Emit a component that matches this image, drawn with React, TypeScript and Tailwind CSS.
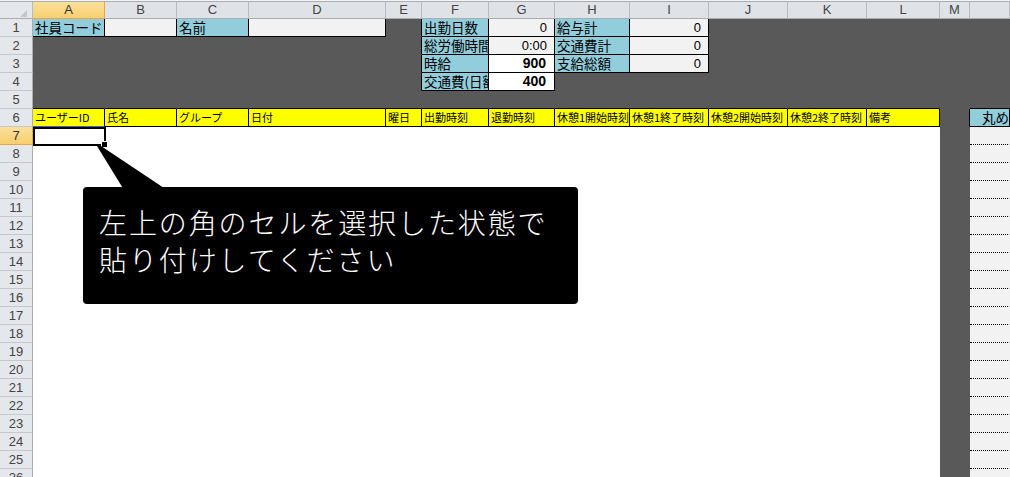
import React from 'react';

const GRID =
  'grid grid-cols-[33px_72px_72px_72px_137px_36px_67px_66px_75px_79px_79px_79px_73px_30px_1fr]';

const LETTERS = ['A', 'B', 'C', 'D', 'E', 'F', 'G', 'H', 'I', 'J', 'K', 'L', 'M', ''];

const S = {
  dark: 'bg-[#595959] border-r-[#595959] border-b-[#595959]',
  darkR: 'bg-[#595959] border-r-black border-b-[#595959]',
  darkB: 'bg-[#595959] border-r-[#595959] border-b-black',
  blue: 'bg-[#92cddc] border-r-black border-b-black',
  gray: 'bg-[#f2f2f2] border-r-black border-b-black',
  white: 'bg-white border-r-black border-b-black',
  yellow: 'bg-[#ffff00] border-r-black border-b-black',
  yellowSel: 'bg-[#ffff00] border-r-black border-b-[#3a62c8]',
  blank: 'bg-white border-r-white border-b-white',
  dots: 'bg-[#f2f2f2] border-r-[#f2f2f2] border-b-black border-dotted',
};

type Cell = {
  s: keyof typeof S;
  t?: string;
  num?: boolean;
  bold?: boolean;
  small?: boolean;
  pad?: boolean;
  clip?: boolean;
};

const d = (n: number, s: keyof typeof S = 'dark'): Cell[] => Array.from({length: n}, () => ({s}));

const headers = [
  'ユーザーID',
  '氏名',
  'グループ',
  '日付',
  '曜日',
  '出勤時刻',
  '退勤時刻',
  '休憩1開始時刻',
  '休憩1終了時刻',
  '休憩2開始時刻',
  '休憩2終了時刻',
  '備考',
];

const rows: Cell[][] = [
  [
    {s: 'blue', t: '社員コード'},
    {s: 'gray'},
    {s: 'blue', t: '名前'},
    {s: 'gray'},
    {s: 'darkR'},
    {s: 'blue', t: '出勤日数'},
    {s: 'gray', t: '0', num: true},
    {s: 'blue', t: '給与計'},
    {s: 'gray', t: '0', num: true},
    ...d(5),
  ],
  [
    ...d(4),
    {s: 'darkR'},
    {s: 'blue', t: '総労働時間', clip: true},
    {s: 'gray', t: '0:00', num: true},
    {s: 'blue', t: '交通費計'},
    {s: 'gray', t: '0', num: true},
    ...d(5),
  ],
  [
    ...d(4),
    {s: 'darkR'},
    {s: 'blue', t: '時給'},
    {s: 'white', t: '900', num: true, bold: true},
    {s: 'blue', t: '支給総額'},
    {s: 'gray', t: '0', num: true},
    ...d(5),
  ],
  [
    ...d(4),
    {s: 'darkR'},
    {s: 'blue', t: '交通費(日額)', clip: true},
    {s: 'white', t: '400', num: true, bold: true},
    ...d(7),
  ],
  [...d(12, 'darkB'), {s: 'dark'}, {s: 'darkB'}],
  [
    ...headers.map((t, i): Cell => ({s: i === 0 ? 'yellowSel' : 'yellow', t, small: true})),
    {s: 'darkR'},
    {s: 'blue', t: '丸め後出勤時刻', pad: true, clip: true},
  ],
  ...Array.from({length: 20}, () => [...d(12, 'blank'), {s: 'dark'}, {s: 'dots'}] as Cell[]),
];

const SheetCell = ({c}: {c: Cell}) => {
  let text = 'text-[13.5px] text-black px-[2px] font-["Noto_Sans_CJK_JP",sans-serif]';
  if (c.small) text = 'text-[11px] text-black px-[2px] font-["Noto_Sans_CJK_JP",sans-serif]';
  if (c.num) text = 'text-[13px] text-black justify-end pr-[7px] font-["Liberation_Sans",sans-serif]';
  if (c.num && c.bold) text = 'text-[14px] font-bold text-black justify-end pr-[8px] font-["Liberation_Sans",sans-serif]';
  if (c.pad) text = 'text-[13.5px] text-black pl-[12px] font-["Noto_Sans_CJK_JP",sans-serif]';
  return (
    <div
      className={`h-[18px] border-r border-b flex items-center whitespace-nowrap leading-[17px] ${
        c.clip ? 'overflow-hidden' : ''
      } ${S[c.s]} ${text}`}
    >
      {c.t}
    </div>
  );
};

export default function App() {
  return (
    <div className="relative w-[1010px] h-[477px] overflow-hidden bg-white font-['Liberation_Sans',sans-serif]">
      {/* column letters */}
      <div className={`${GRID} h-[19px] pt-px bg-[#f4f5f7]`}>
        <div className="relative h-[18px] bg-[#e4e7eb] border-t border-t-[#a9adb2] border-r border-b border-r-[#b8bcc1] border-b-[#a9adb2]">
          <svg className="absolute left-0 top-0" width="33" height="18" viewBox="0 0 33 18">
            <polygon points="27,8 27,15 20,15" fill="#c3c7cc" />
          </svg>
        </div>
        {LETTERS.map((l, i) => (
          <div
            key={i}
            className={`h-[18px] border-t border-r border-b flex items-center justify-center text-[13px] leading-[16px] ${
              i === 0
                ? 'bg-gradient-to-b from-[#fbe09a] to-[#f7cf6f] border-t-[#a9adb2] border-r-[#e2a84a] border-b-[#e2a84a] text-[#333]'
                : 'bg-[#dfe3e8] border-t-[#a9adb2] border-r-[#b8bcc1] border-b-[#a9adb2] text-[#444]'
            }`}
          >
            {l}
          </div>
        ))}
      </div>

      {rows.map((row, r) => (
        <div key={r} className={GRID}>
          <div
            className={`h-[18px] border-r border-b flex items-center justify-center text-[13px] leading-[17px] ${
              r === 6
                ? 'bg-gradient-to-b from-[#fbe09a] to-[#f7cf6f] border-r-[#e2a84a] border-b-[#e2a84a] text-[#333]'
                : 'bg-[#e4e7eb] border-r-[#a9adb2] border-b-[#c5c9ce] text-[#444]'
            }`}
          >
            {r + 1}
          </div>
          {row.map((c, i) => (
            <SheetCell key={i} c={c} />
          ))}
        </div>
      ))}

      {/* selected cell A7 */}
      <div className="absolute left-[33px] top-[127px] w-[73px] h-[19px] border-2 border-black" />
      <div className="absolute left-[101px] top-[141px] w-[7px] h-[7px] bg-black border border-white" />

      {/* callout */}
      <svg className="absolute left-[95px] top-[144px]" width="75" height="47" viewBox="0 0 75 47">
        <polygon points="2,2 6,2 72,46 29,46" fill="#000" />
      </svg>
      <div className="absolute left-[83px] top-[187px] w-[495px] h-[117px] rounded-[4px] bg-black pl-[16px] pt-[17px] text-white text-[28px] leading-[37px] tracking-[1.9px] font-light font-['Noto_Sans_CJK_JP',sans-serif]">
        <div>左上の角のセルを選択した状態で</div>
        <div>貼り付けしてください</div>
      </div>
    </div>
  );
}
